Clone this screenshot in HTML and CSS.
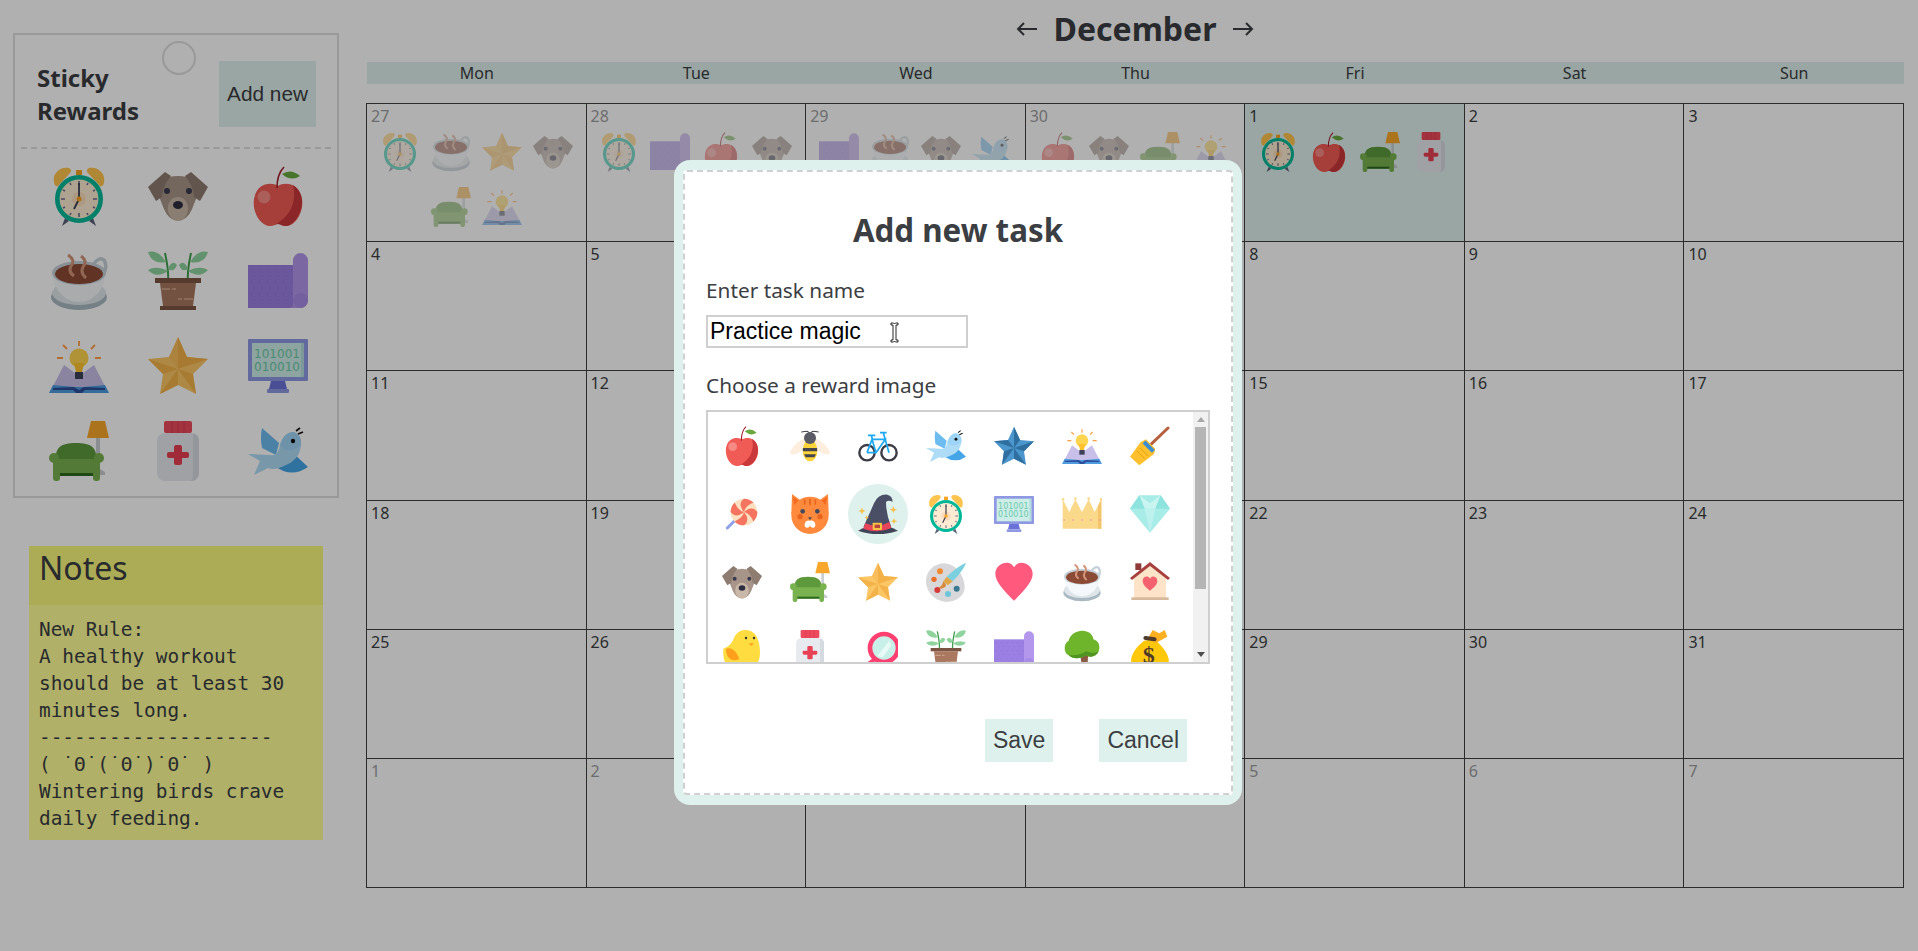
FILE: index.html
```html
<!DOCTYPE html>
<html lang="en">
<head>
<meta charset="utf-8">
<title>Sticky Rewards</title>
<link rel="stylesheet" href="styles.css">
</head>
<body>
<svg class="defs" width="0" height="0" aria-hidden="true">
<defs>
<symbol id="alarm" viewBox="0 0 60 60">
<path d="M5 16C3 7 12 0 20 2c2 1 3 3 1 5L9 20c-2 1-4-1-4-4z" fill="#ffc44d"/>
<path d="M55 16C57 7 48 0 40 2c-2 1-3 3-1 5l12 13c2 1 4-1 4-4z" fill="#ffc44d"/>
<rect x="27" y="4" width="6" height="5" fill="#f5a623"/>
<path d="M16 52l-3 8 7-5M44 52l3 8-7-5" fill="#5a6078"/>
<circle cx="30" cy="33" r="21.700" fill="#fdebd3" stroke="#00b898" stroke-width="4.600"/>
<circle cx="30" cy="33" r="7" fill="#fbdcbc"/>
<path d="M30 15v4M30 47v4M12 33h4M44 33h4M21 17l1 2M39 17l-1 2M14 24l2 1M46 24l-2 1M14 42l2-1M46 42l-2-1M21 49l1-2M39 49l-1-2" stroke="#6a6f8a" stroke-width="1.600"/>
<path d="M30 33V17M30 33l-5 10" stroke="#3c4054" stroke-width="1.800"/>
<circle cx="30" cy="33" r="2.500" fill="#f5a623"/>
</symbol>
<symbol id="dog" viewBox="0 0 60 60">
<path d="M12 14Q30 6 48 14Q51 28 46 38Q42 50 36 53Q30 56 24 53Q18 50 14 38Q9 28 12 14Z" fill="#a89589"/>
<path d="M17 6L0 21l8 14 6-4q1-12 9-21zM43 6l17 15-8 14-6-4q-1-12-9-21z" fill="#8e7c71"/>
<path d="M30 31C21 31 18 42 21 48Q24 55 30 55T39 48C42 42 39 31 30 31Z" fill="#c9b7a7"/>
<circle cx="19" cy="25" r="3" fill="#3a3a4e"/><circle cx="41" cy="25" r="3" fill="#3a3a4e"/>
<ellipse cx="30" cy="39" rx="5" ry="4" fill="#2e2e40"/>
</symbol>
<symbol id="apple" viewBox="0 0 60 60">
<path d="M30 20C24 16 9 16 6 33C4 47 13 60 22 60C26 60 28 58 30 58C32 58 34 60 38 60C47 60 56 47 54 33C51 16 36 16 30 20Z" fill="#f15b55"/>
<path d="M45 19C56 26 56 40 50 50C46 57 41 60 38 60C34 60 32 58 30 58C28 58 26 59 24 60C38 54 50 40 45 19Z" fill="#c9383b"/>
<circle cx="16" cy="31" r="6.500" fill="#f88a85"/>
<path d="M29 22C29 13 31 6 36 1" stroke="#a21c2c" stroke-width="1.600" fill="none"/>
<path d="M34 8Q43 2 52 10Q43 16 34 8Z" fill="#6aa83f"/>
</symbol>
<symbol id="coffee" viewBox="0 0 60 60">
<ellipse cx="30" cy="46" rx="28" ry="13" fill="#a9b9c2"/>
<ellipse cx="30" cy="42" rx="27" ry="12" fill="#dfe6ea"/>
<path d="M4 22C4 38 15 51 30 51C45 51 56 38 56 22Z" fill="#f5f8fa"/>
<path d="M44 14Q50 5 55 9Q59 15 54 24" stroke="#c5d1d8" stroke-width="3.500" fill="none"/>
<ellipse cx="30" cy="22" rx="27" ry="12" fill="#c5d1d8"/>
<ellipse cx="30" cy="23" rx="24" ry="10" fill="#8b4a36"/>
<path d="M19 4Q27 9 22 15Q19 21 25 25M32 5Q39 10 34 16Q31 22 37 27" stroke="#d3967a" stroke-width="3" fill="none"/>
</symbol>
<symbol id="plant" viewBox="0 0 60 60">
<path d="M20 30C21 20 19 12 17 2M40 30C39 20 41 12 43 2" stroke="#3fa14f" stroke-width="2" fill="none"/>
<path d="M18 11Q10-2 0 1Q4 14 18 11zM20 20Q8 14 0 19Q8 28 20 20zM20 18Q24 8 29 14Q26 22 20 18zM42 11Q50-2 60 1Q56 14 42 11zM40 20Q52 14 60 19Q52 28 40 20zM40 18Q36 8 31 14Q34 22 40 18z" fill="#8fd39e"/>
<rect x="7" y="27" width="46" height="5" fill="#7b5443"/>
<path d="M12 32h36l-3 23H15z" fill="#a9785f"/>
<rect x="12" y="55" width="36" height="4" fill="#7b5443"/>
<path d="M14 38h8M24 38h4M30 48h4M36 48h9" stroke="#d3a88e" stroke-width="1.500"/>
</symbol>
<symbol id="scroll" viewBox="0 0 60 60">
<rect x="0" y="14" width="48" height="43" fill="#9b7fe3"/>
<path d="M3 19h42M6 25h39M3 31h42M6 37h39M3 43h42M6 49h39" stroke="#8a6cd6" stroke-width="1" stroke-dasharray="1 7"/>
<path d="M45 9.500a7.500 7.500 0 0 1 15 0v40a7.500 7.500 0 0 1-7.500 7.500H42l3-2z" fill="#b297ec"/>
<circle cx="52.500" cy="49.500" r="7.500" fill="#a88ce6"/>
</symbol>
<symbol id="book" viewBox="0 0 60 60">
<path d="M30 5v5M14 9l4 4M46 9l-4 4M8 22h6M46 22h6" stroke="#ff9f43" stroke-width="1.800"/>
<path d="M3 52L15 29 30 40 45 29 57 52z" fill="#c9c0ea"/>
<path d="M0 57L4 49 26 51h8l22-2 4 8z" fill="#4f9de0"/>
<path d="M4 52l21-1 5 3 5-3 21 1v2H36l-3 3h-6l-3-3H4z" fill="#2e4f9c"/>
<circle cx="30" cy="22" r="9.500" fill="#ffd54f"/>
<path d="M25 27h10l-2 9h-6z" fill="#ffc22e"/>
<rect x="26" y="36" width="8" height="7" fill="#3c4058"/>
</symbol>
<symbol id="stargold" viewBox="0 0 60 60">
<polygon points="30,1 39,21 60,23 45,38 48,58 30,49 12,58 15,38 0,23 21,21" fill="#fdc664"/>
<polygon points="30,33 30,1 39,21 60,23" fill="#efa93f" opacity=".75"/>
<polygon points="30,33 45,38 48,58" fill="#efa93f" opacity=".7"/>
<polygon points="30,33 30,49 12,58" fill="#efa93f" opacity=".7"/>
<polygon points="30,33 15,38 0,23" fill="#efa93f" opacity=".7"/>
<polygon points="30,33 21,21 30,1" fill="#efa93f" opacity=".25"/>
</symbol>
<symbol id="starblue" viewBox="0 0 60 60">
<polygon points="30,1 39,21 60,23 45,38 48,58 30,49 12,58 15,38 0,23 21,21" fill="#4b96cc"/>
<polygon points="30,33 30,1 39,21" fill="#2f6f9f"/>
<polygon points="30,33 60,23 45,38" fill="#2f6f9f"/>
<polygon points="30,33 48,58 30,49" fill="#2f6f9f"/>
<polygon points="30,33 12,58 15,38" fill="#2f6f9f"/>
<polygon points="30,33 0,23 21,21" fill="#2f6f9f"/>
</symbol>
<symbol id="monitor" viewBox="0 0 60 60">
<rect x="0" y="3" width="60" height="42" rx="1" fill="#8f98e3"/>
<rect x="4" y="7" width="52" height="34" fill="#cdeee8"/>
<rect x="53" y="7" width="3" height="34" fill="#b5dcdc"/>
<text x="29" y="22" class="bin">101001</text>
<text x="29" y="35" class="bin">010010</text>
<path d="M23 45h14l2 8H21z" fill="#6a72d8"/>
<rect x="19" y="53" width="22" height="4" rx="1" fill="#8f98e3"/>
</symbol>
<symbol id="couch" viewBox="0 0 60 60">
<path d="M47 15h4v33l5 3v3H47z" fill="#c9ced2"/>
<path d="M42 0h14l4 17H38z" fill="#f9a72b"/>
<path d="M7 42C5 26 12 22 27 22C42 22 49 26 47 42Z" fill="#5e9a3c"/>
<rect x="8" y="38" width="38" height="17" rx="3" fill="#79b350"/>
<rect x="8" y="52" width="38" height="3" fill="#2e6a1e"/>
<rect x="4" y="38" width="7" height="22" rx="3" fill="#79b350"/><rect x="44" y="38" width="7" height="22" rx="3" fill="#79b350"/>
<circle cx="5" cy="37" r="5" fill="#79b350"/><circle cx="50" cy="37" r="5" fill="#79b350"/>
</symbol>
<symbol id="medicine" viewBox="0 0 60 60">
<rect x="9" y="12" width="42" height="48" rx="8" fill="#e7eaef"/>
<path d="M45 12.500a8 8 0 0 1 6 7.500v32a8 8 0 0 1-8 8h-2c4 0 4-3 4-8z" fill="#d5d9e0"/>
<rect x="16" y="0" width="28" height="12" rx="2" fill="#ee4a5e"/>
<path d="M24 0v12M30 0v12M36 0v12" stroke="#d63a50" stroke-width="1"/>
<path d="M26 26a2 2 0 0 1 2-2h4a2 2 0 0 1 2 2v5h5a2 2 0 0 1 2 2v2a2 2 0 0 1-2 2h-5v5a2 2 0 0 1-2 2h-4a2 2 0 0 1-2-2v-5h-5a2 2 0 0 1-2-2v-2a2 2 0 0 1 2-2h5z" fill="#e84055"/>
</symbol>
<symbol id="bird" viewBox="0 0 60 60">
<path d="M14 7L31 22 28 34 14 27Q12 16 14 7Z" fill="#6cbcf0"/>
<path d="M28 46L43 30 60 46Q44 57 28 46Z" fill="#45a5e6"/>
<path d="M0 33L22 34Q30 36 32 24Q36 11 46 11Q54 14 53 24Q52 38 38 44Q26 50 20 47L6 54 12 40z" fill="#aedcf7"/>
<path d="M32 24Q36 11 46 11Q54 14 53 24Q44 32 36 28z" fill="#9ed4f5"/>
<circle cx="45" cy="20" r="2.200" fill="#111"/>
<path d="M48 10l4-3M50 13l5-2" stroke="#111" stroke-width="1.600"/>
</symbol>
<symbol id="bee" viewBox="0 0 60 60">
<path d="M25 17C12 22 0 34 0 42c10 3 22-6 27-16zM35 17c13 5 25 17 25 25-10 3-22-6-27-16z" fill="#fdeedd"/>
<path d="M24 8q4-1 5 3M36 8q-4-1-5 3M17 9l7-1M43 9l-7-1" stroke="#3c3c48" stroke-width="1.500" fill="none"/>
<ellipse cx="30" cy="37" rx="11" ry="16" fill="#ffd43b"/>
<path d="M19.300 33h21.400v5H19.300zM21 42.500h18l-2.500 4.500h-13z" fill="#45454f"/>
<circle cx="30" cy="18" r="9" fill="#5b5b66"/>
</symbol>
<symbol id="bike" viewBox="0 0 60 60">
<g fill="none">
<circle cx="13.500" cy="40" r="11.500" stroke="#3c3c46" stroke-width="3.600"/>
<circle cx="46.500" cy="40" r="11.500" stroke="#3c3c46" stroke-width="3.600"/>
<path d="M13.500 40L21 20H41L27 40H13.500M21 20L27 40M46.500 40L38 10M33 10h10M15 14h11M20 14l1.500 6" stroke="#1fa9f2" stroke-width="2.600"/>
</g>
</symbol>
<symbol id="broom" viewBox="0 0 60 60">
<path d="M31 28L57 3" stroke="#b5603f" stroke-width="4.500" stroke-linecap="round"/>
<path d="M24 20L38 34 36 42 14 59 0 46 16 24z" fill="#ffc02e"/>
<path d="M21 24L35 38" stroke="#3b8ed0" stroke-width="6"/>
<path d="M10 37L22 49M15 33L27 45" stroke="#e9a112" stroke-width="1.500"/>
</symbol>
<symbol id="lolli" viewBox="0 0 60 60">
<path d="M20 39L8 51" stroke="#8fa0e8" stroke-width="4.500" stroke-linecap="round"/>
<g transform="translate(33 27) scale(.87) translate(-34 -24)">
<circle cx="34" cy="24" r="23" fill="#fde1c1"/>
<g fill="#f4745f">
<path d="M34 24Q48 12 57 24A23 23 0 0 1 50.300 40.300Q44 26 34 24Z"/>
<path d="M34 24Q46 38 34 47A23 23 0 0 1 17.700 40.300Q32 34 34 24Z"/>
<path d="M34 24Q20 36 11 24A23 23 0 0 1 17.700 7.700Q24 22 34 24Z"/>
<path d="M34 24Q22 10 34 1A23 23 0 0 1 50.300 7.700Q36 14 34 24Z"/>
</g>
</g>
</symbol>
<symbol id="cat" viewBox="0 0 60 60">
<path d="M3 0L22 14H38L57 0 58 30H2z" fill="#ff8a3d"/>
<path d="M4 4L17 13 7 18z" fill="#f36a1e"/><path d="M56 4L43 13 53 18z" fill="#f36a1e"/>
<circle cx="30" cy="32" r="28" fill="#ff8a3d"/>
<path d="M22 8v8M30 7v10M38 8v8" stroke="#e8651d" stroke-width="2.500"/>
<circle cx="15" cy="34" r="4" fill="#e8651d"/><circle cx="45" cy="34" r="4" fill="#e8651d"/>
<circle cx="19" cy="26" r="3.500" fill="#444a5c"/><circle cx="41" cy="26" r="3.500" fill="#444a5c"/>
<path d="M22 46a6 6 0 0 1 8-6 6 6 0 0 1 8 6 4 4 0 0 1-8 1 4 4 0 0 1-8-1z" fill="#fff"/>
<path d="M27 35h6l-3 4z" fill="#444a5c"/>
</symbol>
<symbol id="hat" viewBox="0 0 60 60">
<path d="M8 50L24 14Q30 0 44 1Q52 3 52 12 46 8 42 12 42 30 50 50z" fill="#4a4f66"/>
<path d="M0 55Q30 38 60 55 46 60 30 60T0 55z" fill="#3f4459"/>
<path d="M11 44Q30 52 47 42L50 51Q30 60 8 52z" fill="#e8455b"/>
<rect x="22" y="43" width="14" height="11" rx="1" fill="#f7c244"/><rect x="25" y="46" width="8" height="5" fill="#b5473f"/>
<path d="M6 20l1.500 4 4 1.500-4 1.500L6 31l-1.500-4-4-1.500 4-1.500zM53 18l1.500 4 4 1.500-4 1.500-1.500 4-1.500-4-4-1.500 4-1.500zM54 36l1.300 3.500 3.500 1.300-3.500 1.300-1.300 3.500-1.300-3.500-3.500-1.300 3.500-1.300zM13 32l1 2.500 2.500 1-2.500 1-1 2.500-1-2.500-2.500-1 2.500-1z" fill="#f5c04a"/>
</symbol>
<symbol id="crown" viewBox="0 0 60 60">
<path d="M1 8L11 27 20 8 30 27 40 8 49 27 59 8V52H1z" fill="#fbd98a"/>
<path d="M54 18L59 8V52H54z" fill="#f5c56a"/>
<path d="M2 39h56" stroke="#f0a0a8" stroke-width="2.400" stroke-dasharray="2.400 11"/>
<circle cx="1.500" cy="8" r="2" fill="#fbd98a"/><circle cx="20" cy="7" r="2" fill="#fbd98a"/><circle cx="40" cy="7" r="2" fill="#fbd98a"/><circle cx="58.500" cy="8" r="2" fill="#fbd98a"/>
</symbol>
<symbol id="diamond" viewBox="0 0 60 60">
<path d="M14 2H46L60 22 30 58 0 22z" fill="#a8ece8"/>
<path d="M14 2L22 22H38L46 2 30 14z" fill="#c9f5f1"/>
<path d="M22 22H38L30 58z" fill="#bdf1ee"/>
<path d="M0 22L14 2 22 22zM60 22L46 2 38 22z" fill="#8ee3de"/>
</symbol>
<symbol id="palette" viewBox="0 0 60 60">
<path d="M28 2C12 2 0 14 0 28 0 46 14 58 30 60 46 60 58 50 58 38 58 24 48 4 28 2Z" fill="#d8d8da"/>
<circle cx="21" cy="14" r="4.500" fill="#f08a2c"/><circle cx="12" cy="26" r="4" fill="#e8702a"/>
<circle cx="46" cy="40" r="4.500" fill="#3c7a92"/><circle cx="33" cy="48" r="4.500" fill="#6cc5d8"/>
<circle cx="17" cy="42" r="4.500" fill="#d63a3a"/>
<path d="M60 1Q58 10 40 29L31 22Q48 6 60 1Z" fill="#7bd0e0"/>
<path d="M31 22L40 29 33 35 26 29z" fill="#e0a64a"/>
<path d="M26 29Q33 35 28 38 22 42 18 38 24 38 26 29z" fill="#d8893c"/>
</symbol>
<symbol id="heart" viewBox="0 0 60 60">
<path d="M30 58C16 44 2 30 2 18 2 7 11 1 19 1 24 1 28 4 30 8 32 4 36 1 41 1 49 1 58 7 58 18 58 30 44 44 30 58Z" fill="#ff5a7e"/>
</symbol>
<symbol id="house" viewBox="0 0 60 60">
<rect x="8" y="2" width="9" height="10" fill="#8e3a3a"/>
<path d="M6 24L30 6 54 24V56H6z" fill="#fde3c8"/>
<path d="M0 24L30 0 60 24 57 27 30 6 3 27z" fill="#a8403f"/>
<rect x="2" y="53" width="56" height="4" fill="#d6b99c"/>
<path d="M30 43C24 38 19 34 19 28 19 23 24 21 27 22 29 23 30 25 30 25 30 25 31 23 33 22 36 21 41 23 41 28 41 34 36 38 30 43Z" fill="#f4616f"/>
</symbol>
<symbol id="duck" viewBox="0 0 60 60">
<path d="M2 28C8 26 14 22 18 12 22 2 30 0 36 0 50 0 57 14 57 34 57 52 46 62 28 62 10 62 0 50 2 28Z" fill="#ffdd40"/>
<path d="M6 28C16 24 24 36 26 44 14 48 6 42 6 28Z" fill="#ff9f1c"/>
<circle cx="36" cy="12" r="1.800" fill="#333"/><circle cx="48" cy="12" r="1.800" fill="#333"/>
<path d="M40 20h8l-4 4z" fill="#ff9f1c"/>
</symbol>
<symbol id="mirror" viewBox="0 0 60 60">
<path d="M25 44L2 60" stroke="#ff3f70" stroke-width="5.500"/>
<circle cx="39" cy="27" r="21" fill="#c9f0e8" stroke="#ff3f70" stroke-width="7"/>
<path d="M29 39L47 16 50 23 37 41z" fill="#e8faf6"/>
</symbol>
<symbol id="tree" viewBox="0 0 60 60">
<path d="M27 36L31 60H38L39 40 48 32 37 36 31 30z" fill="#8a5a44"/>
<path d="M30 1C42 1 47 9 47 14 55 16 58 24 55 32 52 40 42 42 36 38 28 44 16 44 10 38 2 34 2 20 10 16 12 6 22 1 30 1Z" fill="#6fb52c"/>
<path d="M10 38C16 44 28 44 36 38 42 42 52 40 55 32 48 36 42 34 36 32 28 38 18 38 10 38Z" fill="#4f9420"/>
</symbol>
<symbol id="bag" viewBox="0 0 60 60">
<path d="M21 16C6 28 0 40 2 50 4 60 56 60 58 50 60 38 50 26 37 14z" fill="#ffc80b"/>
<path d="M26 14L34 0 44 5 52 0 56 10 38 20z" fill="#ffb020"/>
<rect x="20" y="10" width="20" height="6" rx="3" transform="rotate(8 30 13)" fill="#4f3b2c"/>
<text x="28" y="50" class="dollar">$</text>
</symbol>
<symbol id="ibeam" viewBox="0 0 11 21">
<path d="M2 1h2.500l1 1 1-1H9v2H7v15h2v2H6.500l-1-1-1 1H2v-2h2V3H2z" fill="#fff" stroke="#111" stroke-width=".9"/>
</symbol>
</defs>
</svg>

<div class="page">
<aside class="side">
<section class="panel">
<span class="hole"></span>
<header class="panel-head">
<h2 class="panel-title">Sticky<br>Rewards</h2>
<button class="add">Add new</button>
</header>
<div class="stickers">
<svg class="ic60"><use href="#alarm"/></svg><svg class="ic60"><use href="#dog"/></svg><svg class="ic60"><use href="#apple"/></svg>
<svg class="ic60"><use href="#coffee"/></svg><svg class="ic60"><use href="#plant"/></svg><svg class="ic60"><use href="#scroll"/></svg>
<svg class="ic60"><use href="#book"/></svg><svg class="ic60"><use href="#stargold"/></svg><svg class="ic60"><use href="#monitor"/></svg>
<svg class="ic60"><use href="#couch"/></svg><svg class="ic60"><use href="#medicine"/></svg><svg class="ic60"><use href="#bird"/></svg>
</div>
</section>
<section class="notes">
<h2 class="notes-title">Notes</h2>
<pre class="notes-body">New Rule:
A healthy workout
should be at least 30
minutes long.
--------------------
( ˙Θ˙(˙Θ˙)˙Θ˙ )
Wintering birds crave
daily feeding.</pre>
</section>
</aside>

<main class="cal">
<header class="month">
<svg class="arrow" viewBox="0 0 21 14"><path d="M21 7H2M8 1L2 7l6 6"/></svg>
<h1 class="month-name">December</h1>
<svg class="arrow" viewBox="0 0 21 14"><path d="M0 7h19M13 1l6 6-6 6"/></svg>
</header>
<div class="weekdays"><span>Mon</span><span>Tue</span><span>Wed</span><span>Thu</span><span>Fri</span><span>Sat</span><span>Sun</span></div>
<div class="grid">
<div class="day off"><span class="num">27</span><div class="tasks"><svg class="ic40"><use href="#alarm"/></svg><svg class="ic40"><use href="#coffee"/></svg><svg class="ic40"><use href="#stargold"/></svg><svg class="ic40"><use href="#dog"/></svg><svg class="ic40"><use href="#couch"/></svg><svg class="ic40"><use href="#book"/></svg></div></div>
<div class="day off"><span class="num">28</span><div class="tasks"><svg class="ic40"><use href="#alarm"/></svg><svg class="ic40"><use href="#scroll"/></svg><svg class="ic40"><use href="#apple"/></svg><svg class="ic40"><use href="#dog"/></svg></div></div>
<div class="day off"><span class="num">29</span><div class="tasks"><svg class="ic40"><use href="#scroll"/></svg><svg class="ic40"><use href="#coffee"/></svg><svg class="ic40"><use href="#dog"/></svg><svg class="ic40"><use href="#bird"/></svg></div></div>
<div class="day off"><span class="num">30</span><div class="tasks"><svg class="ic40"><use href="#apple"/></svg><svg class="ic40"><use href="#dog"/></svg><svg class="ic40"><use href="#couch"/></svg><svg class="ic40"><use href="#book"/></svg></div></div>
<div class="day today"><span class="num">1</span><div class="tasks"><svg class="ic40"><use href="#alarm"/></svg><svg class="ic40"><use href="#apple"/></svg><svg class="ic40"><use href="#couch"/></svg><svg class="ic40"><use href="#medicine"/></svg></div></div>
<div class="day"><span class="num">2</span></div>
<div class="day"><span class="num">3</span></div>
<div class="day"><span class="num">4</span></div><div class="day"><span class="num">5</span></div><div class="day"><span class="num">6</span></div><div class="day"><span class="num">7</span></div><div class="day"><span class="num">8</span></div><div class="day"><span class="num">9</span></div><div class="day"><span class="num">10</span></div>
<div class="day"><span class="num">11</span></div><div class="day"><span class="num">12</span></div><div class="day"><span class="num">13</span></div><div class="day"><span class="num">14</span></div><div class="day"><span class="num">15</span></div><div class="day"><span class="num">16</span></div><div class="day"><span class="num">17</span></div>
<div class="day"><span class="num">18</span></div><div class="day"><span class="num">19</span></div><div class="day"><span class="num">20</span></div><div class="day"><span class="num">21</span></div><div class="day"><span class="num">22</span></div><div class="day"><span class="num">23</span></div><div class="day"><span class="num">24</span></div>
<div class="day"><span class="num">25</span></div><div class="day"><span class="num">26</span></div><div class="day"><span class="num">27</span></div><div class="day"><span class="num">28</span></div><div class="day"><span class="num">29</span></div><div class="day"><span class="num">30</span></div><div class="day"><span class="num">31</span></div>
<div class="day off"><span class="num">1</span></div><div class="day off"><span class="num">2</span></div><div class="day off"><span class="num">3</span></div><div class="day off"><span class="num">4</span></div><div class="day off"><span class="num">5</span></div><div class="day off"><span class="num">6</span></div><div class="day off"><span class="num">7</span></div>
</div>
</main>
</div>

<div class="overlay"></div>
<div class="modal">
<div class="modal-inner">
<h2 class="modal-title">Add new task</h2>
<label class="field-label" for="task">Enter task name</label>
<input class="task-input" id="task" type="text" value="Practice magic">
<p class="field-label second">Choose a reward image</p>
<div class="picker">
<div class="picker-list">
<span class="pick"><svg class="ic40"><use href="#apple"/></svg></span><span class="pick"><svg class="ic40"><use href="#bee"/></svg></span><span class="pick"><svg class="ic40"><use href="#bike"/></svg></span><span class="pick"><svg class="ic40"><use href="#bird"/></svg></span><span class="pick"><svg class="ic40"><use href="#starblue"/></svg></span><span class="pick"><svg class="ic40"><use href="#book"/></svg></span><span class="pick"><svg class="ic40"><use href="#broom"/></svg></span>
<span class="pick"><svg class="ic40"><use href="#lolli"/></svg></span><span class="pick"><svg class="ic40"><use href="#cat"/></svg></span><span class="pick selected"><svg class="ic40"><use href="#hat"/></svg></span><span class="pick"><svg class="ic40"><use href="#alarm"/></svg></span><span class="pick"><svg class="ic40"><use href="#monitor"/></svg></span><span class="pick"><svg class="ic40"><use href="#crown"/></svg></span><span class="pick"><svg class="ic40"><use href="#diamond"/></svg></span>
<span class="pick"><svg class="ic40"><use href="#dog"/></svg></span><span class="pick"><svg class="ic40"><use href="#couch"/></svg></span><span class="pick"><svg class="ic40"><use href="#stargold"/></svg></span><span class="pick"><svg class="ic40"><use href="#palette"/></svg></span><span class="pick"><svg class="ic40"><use href="#heart"/></svg></span><span class="pick"><svg class="ic40"><use href="#coffee"/></svg></span><span class="pick"><svg class="ic40"><use href="#house"/></svg></span>
<span class="pick"><svg class="ic40"><use href="#duck"/></svg></span><span class="pick"><svg class="ic40"><use href="#medicine"/></svg></span><span class="pick"><svg class="ic40"><use href="#mirror"/></svg></span><span class="pick"><svg class="ic40"><use href="#plant"/></svg></span><span class="pick"><svg class="ic40"><use href="#scroll"/></svg></span><span class="pick"><svg class="ic40"><use href="#tree"/></svg></span><span class="pick"><svg class="ic40"><use href="#bag"/></svg></span>
</div>
<div class="scrollbar"><i class="sb-btn"><b class="tri-up"></b></i><i class="sb-thumb"></i><i class="sb-btn sb-end"><b class="tri-down"></b></i></div>
</div>
<div class="actions">
<button class="btn">Save</button>
<button class="btn">Cancel</button>
</div>
</div>
<svg class="ibeam"><use href="#ibeam"/></svg>
</div>
</body>
</html>
```

FILE: styles.css
```css
* { box-sizing: border-box; }
html, body { margin: 0; height: 100%; }
body {
  background: #fff;
  color: #3b3e42;
  font-family: "Noto Sans", sans-serif;
  overflow: hidden;
}
.defs { position: absolute; }
.bin { font-family: "DejaVu Sans", sans-serif; font-size: 12px; fill: #6fc9ab; text-anchor: middle; }
.dollar { font-family: "Liberation Serif", serif; font-size: 36px; font-weight: 700; fill: #4f3b2c; text-anchor: middle; }
.ic60 { width: 60px; height: 60px; display: block; justify-self: center; }
.ic40 { width: 40px; height: 40px; display: block; }

.page { display: flex; height: 951px; }
.side { width: 366px; flex: none; padding: 33px 0 0 13px; }
.panel {
  position: relative;
  width: 326px;
  height: 465px;
  border: 2px solid #dedede;
}
.hole {
  position: absolute;
  left: 147px;
  top: 6px;
  width: 34px;
  height: 34px;
  border-radius: 50%;
  border: 2px solid #dedede;
}
.panel-head {
  display: flex;
  justify-content: space-between;
  align-items: center;
  margin: 0 6px;
  padding: 26px 15px 20px 16px;
  border-bottom: 2px dashed #dedede;
}
.panel-title { margin: 0; font-size: 24px; line-height: 33px; font-weight: 700; }
.add {
  width: 97px;
  height: 66px;
  padding: 0;
  border: 0;
  background: #dff1ec;
  color: inherit;
  font: 20.8px "Liberation Sans", sans-serif;
}
.stickers {
  display: grid;
  grid-template-columns: repeat(3, 99.5px);
  row-gap: 25px;
  padding: 17px 0 0 14px;
}

.notes { width: 294px; margin: 48px 0 0 16px; background: #ffff99; }
.notes-title {
  margin: 0;
  height: 59px;
  padding: 0 10px;
  background: #f8fa7b;
  font-size: 32px;
  line-height: 44px;
  font-weight: 400;
}
.notes-body {
  margin: 0;
  padding: 11px 10px 8px;
  font: 19.4px/27px "DejaVu Sans Mono", monospace;
}

.cal { width: 1538px; flex: none; }
.month {
  display: flex;
  justify-content: center;
  align-items: center;
  gap: 17px;
  height: 62px;
  padding-bottom: 4px;
}
.month-name { margin: 0; font-size: 32px; line-height: 44px; font-weight: 700; }
.arrow { width: 21px; height: 14px; fill: none; stroke: #3b3e42; stroke-width: 2; }
.weekdays {
  display: grid;
  grid-template-columns: repeat(7, 1fr);
  height: 22px;
  margin: 0 0 19px 1px;
  background: #dff1ec;
  font-size: 16px;
  line-height: 22px;
  text-align: center;
}
.grid {
  display: grid;
  grid-template-columns: repeat(7, 1fr);
  grid-template-rows: 138px repeat(5, 129.25px);
  width: 1538px;
  border-top: 1px solid #3f3f3f;
  border-left: 1px solid #3f3f3f;
}
.day {
  border-right: 1px solid #3f3f3f;
  border-bottom: 1px solid #3f3f3f;
  padding: 1px 0 0;
  min-width: 0;
}
.num { display: block; padding-left: 4px; font-size: 16px; line-height: 22px; }
.off .num, .off .tasks { opacity: .5; }
.today { background: #dff1ec; }
.tasks {
  display: flex;
  flex-wrap: wrap;
  justify-content: center;
  gap: 15px 11px;
  margin-top: 5px;
}

.overlay { position: fixed; inset: 0; background: rgba(0, 0, 0, .31); }
.modal {
  position: fixed;
  left: 674px;
  top: 160px;
  width: 568px;
  height: 645px;
  padding: 10px 9px;
  background: #dff1ec;
  border-radius: 16px;
}
.modal-inner {
  height: 100%;
  padding: 36px 21px 0 21px;
  background: #fff;
  border: 2px dashed #d0d0d0;
  border-radius: 4px;
}
.modal-title { margin: 0 0 24px; text-align: center; font-size: 31.3px; line-height: 44px; font-weight: 700; }
.field-label { display: block; margin: 0; font-size: 20.8px; line-height: 28px; }
.second { margin-top: 23px; }
.task-input {
  display: block;
  width: 262px;
  height: 33px;
  margin-top: 11px;
  padding: 1px 2px;
  border: 2px solid #cfcfcf;
  color: #000;
  font: 23px "Liberation Sans", sans-serif;
  outline: 0;
}
.picker {
  position: relative;
  width: 504px;
  height: 254px;
  margin-top: 11px;
  border: 2px solid #cfcfcf;
}
.picker-list {
  display: flex;
  flex-wrap: wrap;
  align-content: flex-start;
  width: 485px;
  height: 100%;
  overflow: hidden;
}
.scrollbar {
  position: absolute;
  top: 0;
  right: 0;
  bottom: 0;
  width: 15px;
  display: flex;
  flex-direction: column;
  background: #f1f1f1;
}
.sb-btn { display: flex; align-items: center; justify-content: center; height: 15px; flex: none; }
.sb-end { margin-top: auto; }
.sb-thumb { display: block; height: 162px; margin: 0 2px; background: #b5b5b5; }
.tri-up { border: 4.5px solid transparent; border-top: 0; border-bottom: 5px solid #a8a8a8; }
.tri-down { border: 4.5px solid transparent; border-bottom: 0; border-top: 5px solid #505050; }
.pick { width: 60px; height: 60px; margin: 4px; padding: 10px; border-radius: 50%; }
.selected { background: #dff1ec; }
.actions { display: flex; justify-content: flex-end; gap: 46px; margin-top: 55px; padding-right: 23px; }
.btn {
  height: 43px;
  padding: 0 8px;
  border: 0;
  background: #dff1ec;
  color: inherit;
  font: 23px "Liberation Sans", sans-serif;
}
.ibeam { position: absolute; left: 215px; top: 162px; width: 11px; height: 21px; }
```
